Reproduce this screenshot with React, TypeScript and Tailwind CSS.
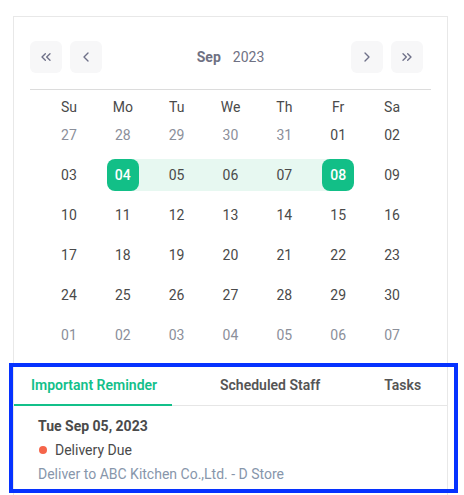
import { ChevronLeft, ChevronRight, ChevronsLeft, ChevronsRight } from "lucide-react";

const WEEK = ["Su", "Mo", "Tu", "We", "Th", "Fr", "Sa"];

type Day = { n: string; muted?: boolean; sel?: boolean; range?: "start" | "mid" | "end" };

function buildDays(): Day[][] {
  const prev = ["27", "28", "29", "30", "31"].map((n) => ({ n, muted: true }));
  const cur: Day[] = [];
  for (let i = 1; i <= 30; i++) {
    const n = i.toString().padStart(2, "0");
    let d: Day = { n };
    if (i === 4) d = { n, sel: true, range: "start" };
    else if (i > 4 && i < 8) d = { n, range: "mid" };
    else if (i === 8) d = { n, sel: true, range: "end" };
    cur.push(d);
  }
  const next = ["01", "02", "03", "04", "05", "06", "07"].map((n) => ({ n, muted: true }));
  const all = [...prev, ...cur, ...next];
  const rows: Day[][] = [];
  for (let i = 0; i < all.length; i += 7) rows.push(all.slice(i, i + 7));
  return rows;
}

function NavBtn({ children }: { children: React.ReactNode }) {
  return (
    <button className="w-8 h-8 rounded-md bg-[#f7f7f8] flex items-center justify-center text-[#6e7088]">
      {children}
    </button>
  );
}

function DayCell({ d }: { d: Day }) {
  const band =
    d.range === "start"
      ? "bg-[linear-gradient(to_right,transparent_50%,#e7f8f1_50%)]"
      : d.range === "end"
        ? "bg-[linear-gradient(to_left,transparent_50%,#e7f8f1_50%)]"
        : d.range === "mid"
          ? "bg-[#e7f8f1]"
          : "";
  return (
    <div className="h-10 flex items-center justify-center">
      <div className={`h-8 w-full flex items-center justify-center ${band}`}>
        <div
          className={`h-8 w-8 flex items-center justify-center rounded-lg text-[14px] ${
            d.sel ? "bg-[#12bf87] text-white font-medium" : d.muted ? "text-[#8b8f9a]" : "text-[#4a4a4a]"
          }`}
        >
          {d.n}
        </div>
      </div>
    </div>
  );
}

export default function App() {
  const rows = buildDays();
  return (
    <div className="w-[464px] h-[495px] overflow-hidden bg-white" style={{ fontFamily: "Roboto, 'Liberation Sans', sans-serif" }}>
      <div className="ml-[13px] mt-[16px] w-[435px] h-[520px] border border-[#e8e8e8]">
        {/* calendar */}
        <div className="px-4 pt-6">
          <div className="flex items-center justify-between pb-4 border-b border-[#dcdcdc]">
            <div className="flex gap-2">
              <NavBtn><ChevronsLeft size={16} strokeWidth={2} /></NavBtn>
              <NavBtn><ChevronLeft size={16} strokeWidth={2} /></NavBtn>
            </div>
            <div className="text-[14px] text-[#6f7183] flex gap-3 pl-2">
              <span className="font-bold">Sep</span>
              <span>2023</span>
            </div>
            <div className="flex gap-2 mr-2">
              <NavBtn><ChevronRight size={16} strokeWidth={2} /></NavBtn>
              <NavBtn><ChevronsRight size={16} strokeWidth={2} /></NavBtn>
            </div>
          </div>
          <div className="px-3">
            <div className="grid grid-cols-7 h-[25px] pt-[7px]">
              {WEEK.map((w) => (
                <div key={w} className="text-center text-[14px] leading-5 text-[#4a4a4a]">{w}</div>
              ))}
            </div>
            {rows.map((r, i) => (
              <div key={i} className="grid grid-cols-7">
                {r.map((d, j) => (
                  <DayCell key={j} d={d} />
                ))}
              </div>
            ))}
          </div>
        </div>

        {/* reminders */}
        <div className="relative mt-[11px]">
          <div className="absolute -left-[5px] -top-[3px] w-[449px] h-[130px] border-4 border-[#0632ff] pointer-events-none z-10"></div>
          <div className="flex gap-8 border-b border-[#e6e6e6] h-10">
            <div className="pl-[17px] flex items-center whitespace-nowrap text-[14px] font-semibold text-[#13c08a] border-b-2 border-[#13c08a] -mb-px w-[158px] shrink-0">
              Important Reminder
            </div>
            <div className="px-4 flex items-center whitespace-nowrap text-[14px] font-semibold text-[#555]">Scheduled Staff</div>
            <div className="px-4 flex items-center whitespace-nowrap text-[14px] font-semibold text-[#555]">Tasks</div>
          </div>
          <div className="px-6 pt-2 text-[14px] leading-6">
            <div className="font-bold text-[#4a4a4a]">Tue Sep 05, 2023</div>
            <div className="flex items-center gap-2 text-[#4a4a4a]">
              <span className="w-2 h-2 rounded-full bg-[#f5654a] ml-[1px]"></span>
              <span>Delivery Due</span>
            </div>
            <div className="text-[#8796ab]">Deliver to ABC Kitchen Co.,Ltd. - D Store</div>
          </div>
        </div>
      </div>
    </div>
  );
}
